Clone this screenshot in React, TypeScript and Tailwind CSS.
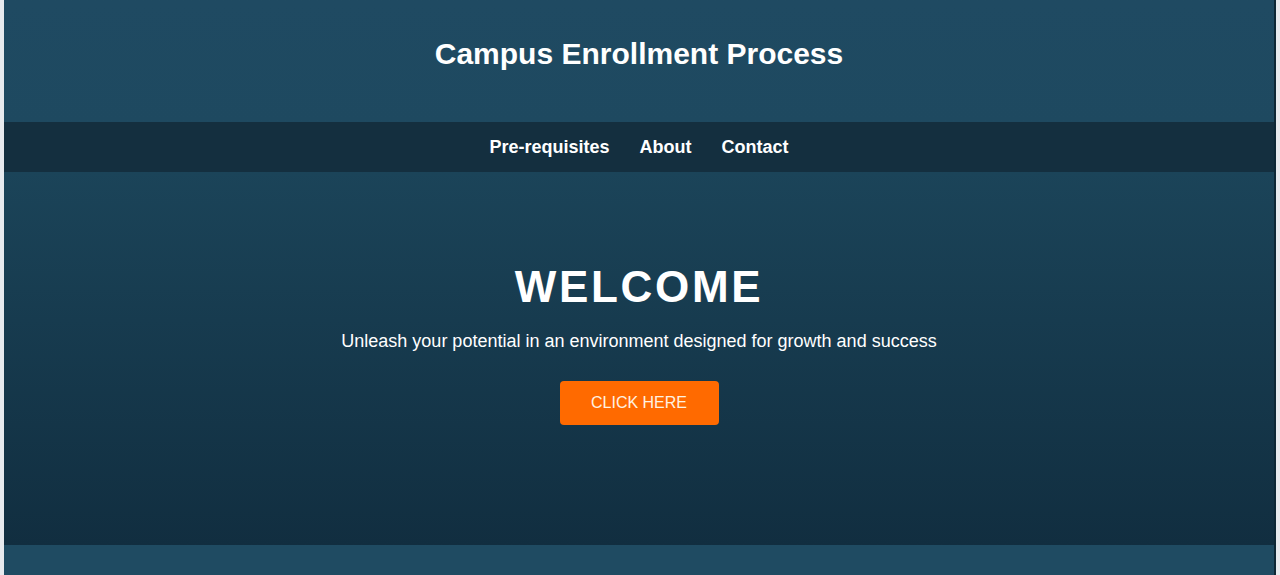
import React from "react";

export default function App() {
  return (
    <div
      className="flex h-[575px] w-[1280px] overflow-hidden bg-[#e7eaee]"
      style={{ fontFamily: '"Liberation Sans", Arial, sans-serif' }}
    >
      <div className="w-[4px] shrink-0 bg-[#e7eaee]" />
      <div className="flex w-[1272px] shrink-0 flex-col border-r-2 border-[#0e2735]">
        <header className="flex h-[122px] shrink-0 justify-center bg-gradient-to-b from-[#1f4a62] to-[#1e4960] pt-[37px]">
          <h1 className="text-[30px] font-bold leading-[34px] text-white">
            Campus Enrollment Process
          </h1>
        </header>
        <nav className="flex h-[50px] shrink-0 items-center justify-center gap-[30px] bg-[#142f3f]">
          <a className="text-[18px] font-bold leading-[22px] text-white">Pre-requisites</a>
          <a className="text-[18px] font-bold leading-[22px] text-white">About</a>
          <a className="text-[18px] font-bold leading-[22px] text-white">Contact</a>
        </nav>
        <section className="flex h-[373px] shrink-0 flex-col items-center bg-gradient-to-b from-[#1b4459] to-[#112e40] pt-[89px]">
          <h2 className="text-[44px] font-bold leading-[52px] tracking-[2.7px] text-white">
            WELCOME
          </h2>
          <p className="mt-[16px] text-[18px] leading-[24px] text-white">
            Unleash your potential in an environment designed for growth and success
          </p>
          <button className="mt-[28px] h-[44px] w-[159px] rounded-[4px] bg-[#ff6a00] text-[16px] leading-[20px] text-[#fff1e0]">
            CLICK HERE
          </button>
        </section>
        <footer className="h-[30px] shrink-0 bg-[#1f4b62]" />
      </div>
      <div className="w-[4px] shrink-0 bg-[#e7eaee]" />
    </div>
  );
}
